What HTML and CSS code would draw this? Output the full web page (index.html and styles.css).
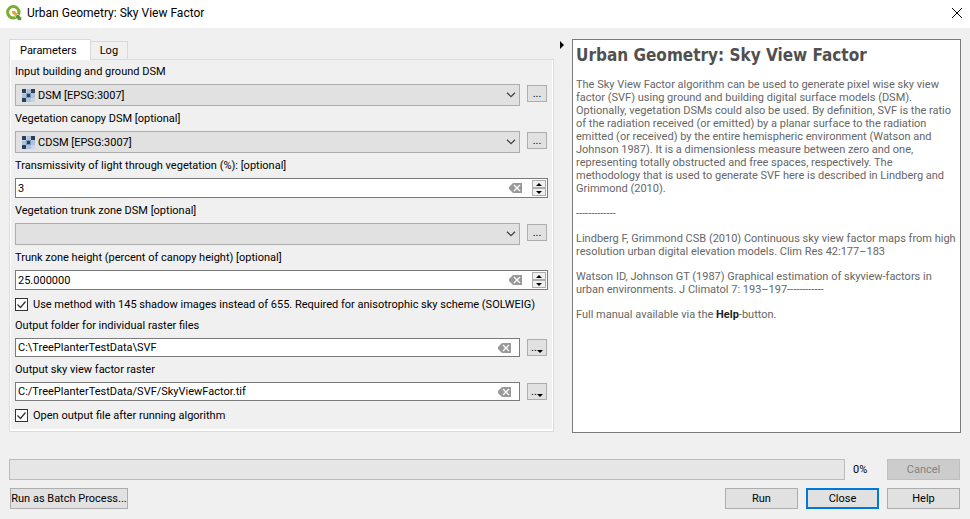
FILE: index.html
```html
<!DOCTYPE html>
<html lang="en">
<head>
<meta charset="utf-8">
<title>Urban Geometry: Sky View Factor</title>
<link rel="stylesheet" href="styles.css">
</head>
<body>
<svg class="defs" aria-hidden="true">
  <symbol id="raster" viewBox="0 0 13 13">
    <rect width="13" height="13" fill="#a9c3e0"/>
    <path fill="#2e3f55" d="M0 0h4v4H0zM9 0h4v4H9zM5 5h3v3H5zM0 9h4v4H0z"/>
    <path fill="#c6d6e8" d="M4 0h1v4H4zM0 4h4v1H0zM9 9h4v4H9z"/>
    <path fill="#7f98b5" d="M4 4h1v5H4zM8 4h1v5H8zM5 4h3v1H5zM5 8h3v1H5z"/>
  </symbol>
  <symbol id="clear" viewBox="0 0 13 10">
    <path fill="#999" d="M4 0h9v10H4L0 6V4z"/>
    <path stroke="#fff" stroke-width="1.3" fill="none" d="M5 2l6 6M11 2l-6 6"/>
  </symbol>
  <symbol id="chevron" viewBox="0 0 10 6">
    <path stroke="#444" stroke-width="1.3" fill="none" d="M1 .7l4 4 4-4"/>
  </symbol>
</svg>
<div class="dialog">
  <header class="titlebar">
    <svg class="logo" viewBox="0 0 16 16" aria-hidden="true">
      <circle cx="7.3" cy="7.3" r="5.700" fill="none" stroke="#7aaf2e" stroke-width="3"/>
      <path d="M9.500 9.500h2.800l3.200 3.200V15.500h-2.800L9.500 12.300z" fill="#5c9632" stroke="#fff" stroke-width=".6"/>
      <path d="M6 6h2.800l2 2v2.800H9L6 8z" fill="#ee9d4b"/>
    </svg>
    <span class="caption">Urban Geometry: Sky View Factor</span>
    <button class="close-x" type="button" aria-label="Close window">
      <svg viewBox="0 0 10 10"><path d="M0 0l10 10M10 0L0 10" stroke="#000" fill="none"/></svg>
    </button>
  </header>

  <main class="content">
    <section class="left">
      <div class="tabs" role="tablist">
        <button class="tab active" type="button" role="tab" aria-selected="true">Parameters</button>
        <button class="tab" type="button" role="tab" aria-selected="false">Log</button>
      </div>
      <form class="panel">
        <label for="dsm">Input building and ground DSM</label>
        <div class="row">
          <div class="combo">
            <select id="dsm"><option>DSM [EPSG:3007]</option></select>
            <svg class="layer"><use href="#raster"/></svg>
            <svg class="chevron"><use href="#chevron"/></svg>
          </div>
          <button class="browse" type="button">...</button>
        </div>
        <label for="cdsm">Vegetation canopy DSM [optional]</label>
        <div class="row">
          <div class="combo">
            <select id="cdsm"><option>CDSM [EPSG:3007]</option></select>
            <svg class="layer"><use href="#raster"/></svg>
            <svg class="chevron"><use href="#chevron"/></svg>
          </div>
          <button class="browse" type="button">...</button>
        </div>
        <label for="trans">Transmissivity of light through vegetation (%): [optional]</label>
        <div class="field spin">
          <input id="trans" type="text" value="3">
          <svg class="clear"><use href="#clear"/></svg>
          <div class="steps">
            <button type="button" aria-label="Increase"><i class="up"></i></button>
            <button type="button" aria-label="Decrease"><i class="down"></i></button>
          </div>
        </div>
        <label for="tdsm">Vegetation trunk zone DSM [optional]</label>
        <div class="row">
          <div class="combo">
            <select id="tdsm"><option></option></select>
            <svg class="chevron"><use href="#chevron"/></svg>
          </div>
          <button class="browse" type="button">...</button>
        </div>
        <label for="trunk">Trunk zone height (percent of canopy height) [optional]</label>
        <div class="field spin">
          <input id="trunk" type="text" value="25.000000">
          <svg class="clear"><use href="#clear"/></svg>
          <div class="steps">
            <button type="button" aria-label="Increase"><i class="up"></i></button>
            <button type="button" aria-label="Decrease"><i class="down"></i></button>
          </div>
        </div>
        <div class="check">
          <span class="tick"><input id="aniso" type="checkbox" checked><svg viewBox="0 0 13 13"><path d="M2.500 6.500l3 3 5-6" stroke="#333" stroke-width="1.3" fill="none"/></svg></span>
          <label for="aniso">Use method with 145 shadow images instead of 655. Required for anisotrophic sky scheme (SOLWEIG)</label>
        </div>
        <label for="outdir">Output folder for individual raster files</label>
        <div class="row">
          <div class="field path">
            <input id="outdir" type="text" value="C:\TreePlanterTestData\SVF">
            <svg class="clear"><use href="#clear"/></svg>
          </div>
          <button class="browse menu" type="button">..<i class="down"></i></button>
        </div>
        <label for="outfile">Output sky view factor raster</label>
        <div class="row">
          <div class="field path">
            <input id="outfile" type="text" value="C:/TreePlanterTestData/SVF/SkyViewFactor.tif">
            <svg class="clear"><use href="#clear"/></svg>
          </div>
          <button class="browse menu" type="button">..<i class="down"></i></button>
        </div>
        <div class="check">
          <span class="tick"><input id="open" type="checkbox" checked><svg viewBox="0 0 13 13"><path d="M2.500 6.500l3 3 5-6" stroke="#333" stroke-width="1.3" fill="none"/></svg></span>
          <label for="open">Open output file after running algorithm</label>
        </div>
      </form>
    </section>

    <button class="splitter" type="button" aria-label="Collapse help"><i></i></button>

    <article class="help">
      <h1>Urban Geometry: Sky View Factor</h1>
      <p>The Sky View Factor algorithm can be used to generate pixel wise sky view<br>factor (SVF) using ground and building digital surface models (DSM).<br>Optionally, vegetation DSMs could also be used. By definition, SVF is the ratio<br>of the radiation received (or emitted) by a planar surface to the radiation<br>emitted (or received) by the entire hemispheric environment (Watson and<br>Johnson 1987). It is a dimensionless measure between zero and one,<br>representing totally obstructed and free spaces, respectively. The<br>methodology that is used to generate SVF here is described in Lindberg and<br>Grimmond (2010).</p>
      <p>-------------</p>
      <p>Lindberg F, Grimmond CSB (2010) Continuous sky view factor maps from high<br>resolution urban digital elevation models. Clim Res 42:177–183</p>
      <p>Watson ID, Johnson GT (1987) Graphical estimation of skyview-factors in<br>urban environments. J Climatol 7: 193–197------------</p>
      <p>Full manual available via the <b>Help</b>-button.</p>
    </article>
  </main>

  <footer class="footer">
    <div class="bar">
      <progress id="prog" value="0" max="100"></progress>
      <label class="percent" for="prog">0%</label>
      <button class="btn" type="button" disabled>Cancel</button>
    </div>
    <div class="bar actions">
      <button class="btn batch" type="button">Run as Batch Process...</button>
      <button class="btn" type="button">Run</button>
      <button class="btn default" type="button">Close</button>
      <button class="btn" type="button">Help</button>
    </div>
  </footer>
</div>
</body>
</html>
```
FILE: styles.css
```css
* { box-sizing: border-box; }

body {
  margin: 0;
  background: #f0f0f0;
  color: #000;
  font: 11px/13px Roboto, "DejaVu Sans Condensed", sans-serif;
}

button, input, select { font: inherit; color: inherit; margin: 0; }
svg { display: block; }
.defs { position: absolute; width: 0; height: 0; }

.dialog { display: flex; flex-direction: column; min-height: 100vh; }

.titlebar {
  display: flex;
  align-items: center;
  height: 28px;
  padding: 0 8px 3px 6px;
  background: #fff;
}
.logo { width: 16px; height: 16px; margin-right: 5px; }
.caption { flex: 1; font: 12px/16px Roboto, "Open Sans", sans-serif; }
.close-x { padding: 0; border: 0; background: none; }
.close-x svg { width: 10px; height: 10px; }

.content {
  flex: 1;
  display: grid;
  grid-template-columns: minmax(0, 545fr) 18px minmax(0, 389fr);
  padding: 11px 9px 0;
}
.left { display: flex; flex-direction: column; padding-bottom: 1px; }

.tabs { display: flex; align-items: flex-end; height: 20px; }
.tab {
  height: 18px;
  padding: 0 9px;
  border: 1px solid #d9d9d9;
  border-width: 1px 1px 0 0;
  background: #f0f0f0;
}
.tab.active {
  height: 21px;
  margin-bottom: -1px;
  padding: 0 13px 0 10px;
  border-left-width: 1px;
  background: #fff;
  position: relative;
}

.panel {
  flex: 1;
  display: flex;
  flex-direction: column;
  gap: 6px;
  padding: 5px;
  border: 1px solid #dcdcdc;
  box-shadow: inset 1px 0 #fff, inset -1px -2px #fff;
}
.row { display: flex; align-items: flex-start; gap: 7px; padding-right: 1px; }

.combo { flex: 1; display: grid; align-items: center; }
.combo > * { grid-area: 1 / 1; }
.combo select {
  appearance: none;
  width: 100%;
  height: 22px;
  padding: 0 20px 0 22px;
  border: 1px solid #adadad;
  border-radius: 0;
  background: #e1e1e1;
}
.layer { width: 13px; height: 13px; margin-left: 7px; pointer-events: none; }
.chevron { width: 10px; height: 6px; justify-self: end; margin-right: 4px; pointer-events: none; }

.browse {
  width: 20px;
  height: 17px;
  margin-top: 1px;
  padding: 0;
  border: 1px solid #adadad;
  background: #e1e1e1;
}
.browse.menu { display: flex; align-items: center; justify-content: center; }
.menu .down { margin-top: 7px; }

.field { display: flex; align-items: center; border: 1px solid #7a7a7a; background: #fff; }
.field input { flex: 1; min-width: 0; height: 17px; padding: 0 2px; border: 0; background: none; outline: 0; }
.path { flex: 1; height: 19px; }
.clear { width: 13px; height: 10px; margin-right: 8px; }
.spin { height: 20px; padding-right: 1px; }
.spin .clear { margin-right: 10px; }
.steps { display: flex; flex-direction: column; }
.steps button {
  display: flex;
  align-items: center;
  justify-content: center;
  width: 14px;
  height: 8px;
  padding: 0;
  border: 1px solid #adadad;
  background: #f0f0f0;
}

.up, .down { border: 3px solid transparent; }
.up { border-top: 0; border-bottom-color: #000; }
.down { border-bottom: 0; border-top-color: #000; }

.check { display: flex; align-items: center; gap: 5px; height: 17px; }
.tick { display: grid; }
.tick > * { grid-area: 1 / 1; width: 13px; height: 13px; pointer-events: none; }
.tick input { appearance: none; border: 1px solid #333; background: #fff; pointer-events: auto; }
.tick input:not(:checked) + svg { visibility: hidden; }

.splitter { padding: 2px 0 0 6px; border: 0; background: none; display: flex; align-items: flex-start; }
.splitter i { border: 4px solid transparent; border-right: 0; border-left-color: #000; }

.help { padding: 5px 3px; border: 1px solid #7a7a7a; background: #fff; color: #666; }
.help h1 { margin: 0 0 13px; font: bold 17px/20px "DejaVu Sans Condensed", sans-serif; color: #505050; }
.help p { margin: 0 0 12px; }
.help b { color: #222; }

.footer { padding: 26px 10px 10px 9px; }
.bar { display: flex; align-items: center; gap: 8px; }
.bar + .bar { margin-top: 8px; }
progress { appearance: none; flex: 1; height: 21px; border: 1px solid #bcbcbc; background: #e6e6e6; }
progress::-webkit-progress-bar { background: #e6e6e6; }
.percent { width: 26px; }
.btn { width: 73px; height: 21px; padding: 0; border: 1px solid #adadad; background: #e1e1e1; }
.btn:disabled { background: #ccc; border-color: #bfbfbf; color: #838383; }
.btn.default { border: 2px solid #0078d7; }
.actions { padding-left: 1px; }
.batch { width: 118px; margin-right: auto; }
```
